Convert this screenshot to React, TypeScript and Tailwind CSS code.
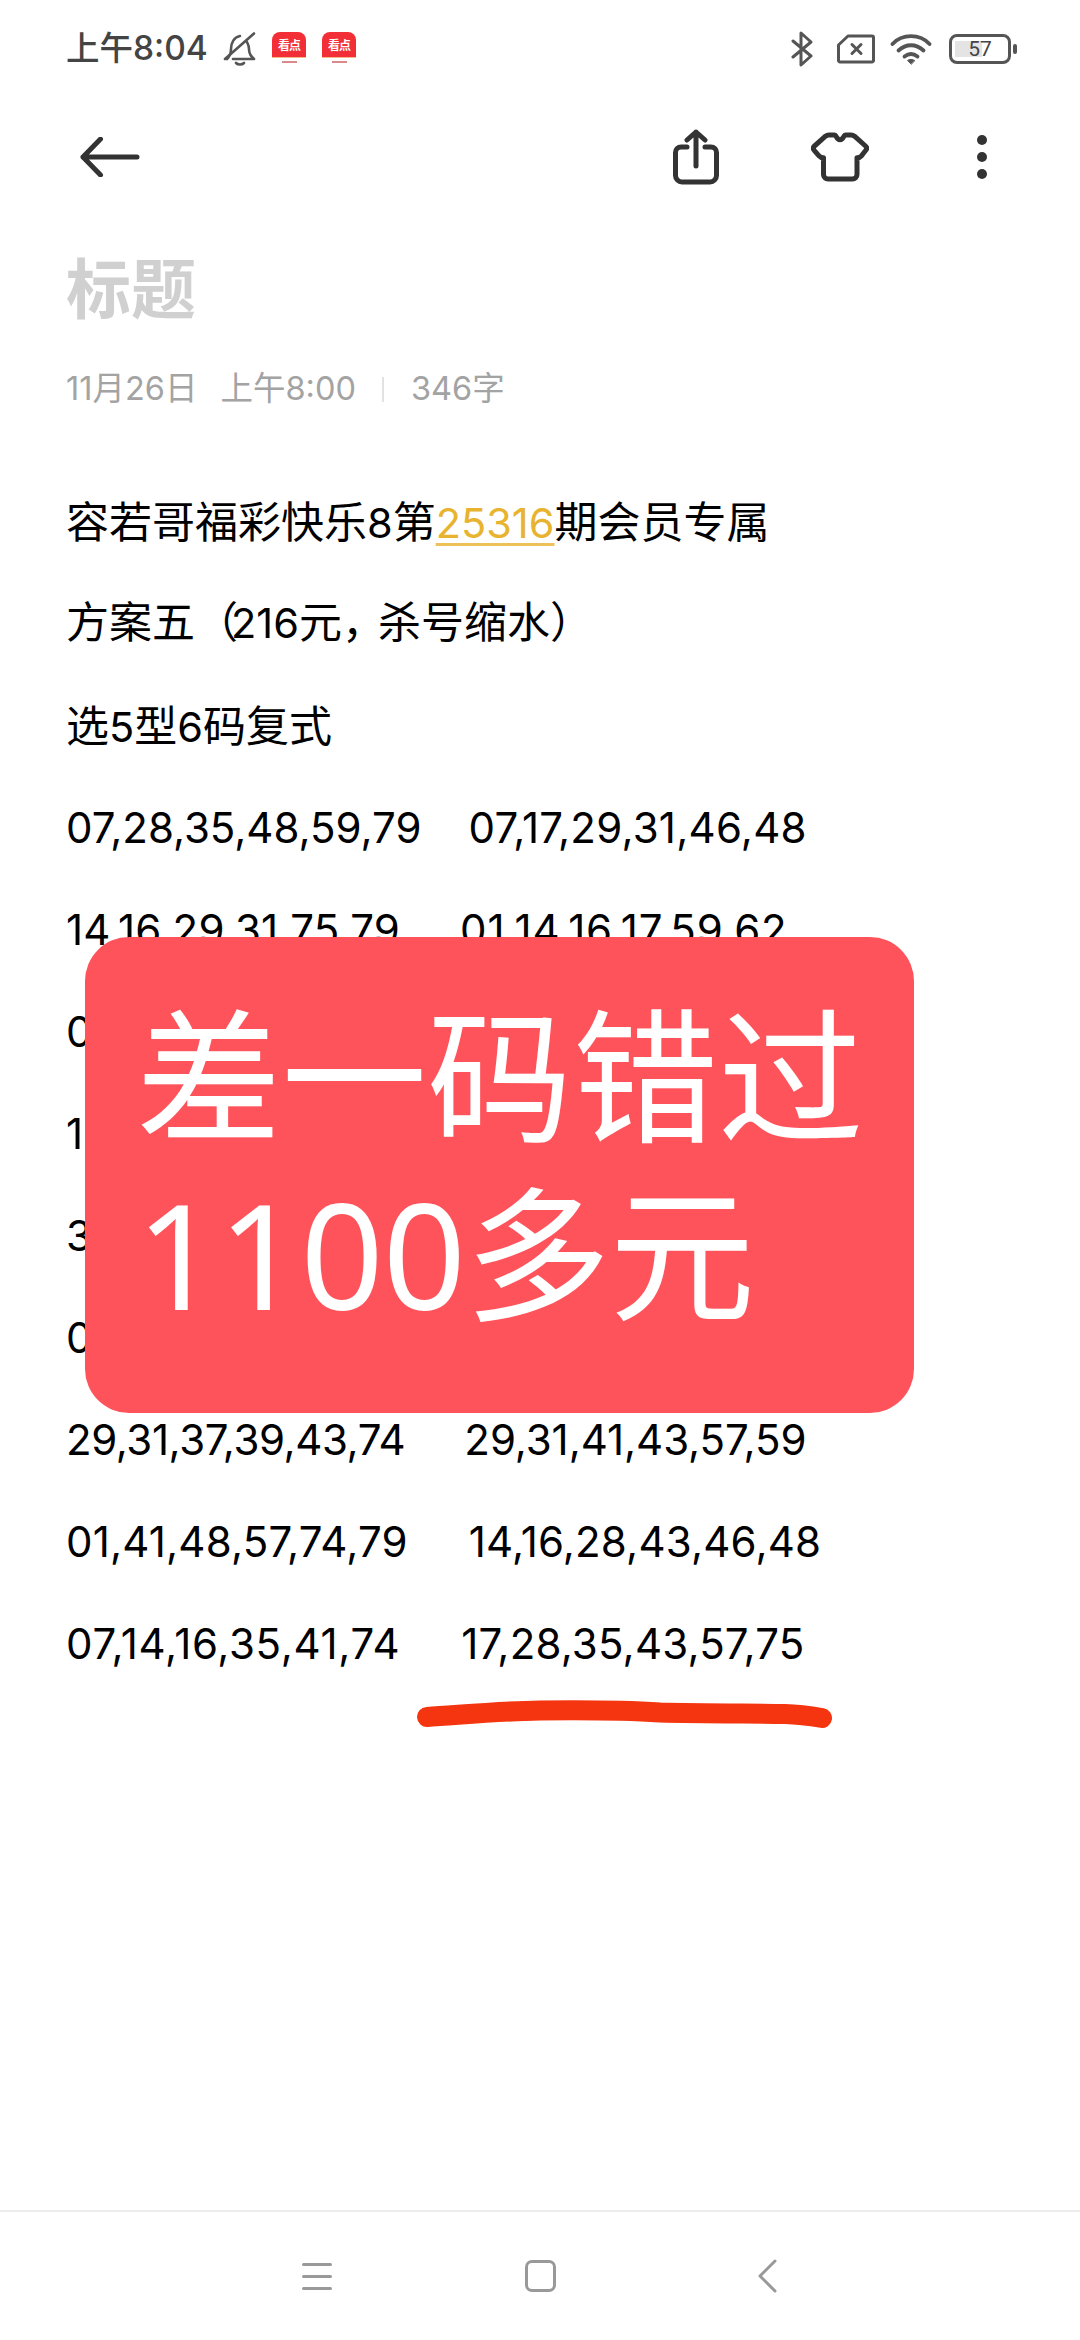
const rows: { a: string; b?: string; gap?: string; ta?: string; tb?: string }[] = [
  { a: "07,28,35,48,59,79", b: "07,17,29,31,46,48", gap: "ml-[47px]", tb: "tracking-[0.25px]" },
  { a: "14,16,29,31,75,79", b: "01,14,16,17,59,62", gap: "ml-[60px]", ta: "tracking-[0.25px]", tb: "tracking-[0.8px]" },
  { a: "0" },
  { a: "1" },
  { a: "3" },
  { a: "0" },
  { a: "29,31,37,39,43,74", b: "29,31,41,43,57,59", gap: "ml-[59px]", ta: "tracking-[-0.4px]", tb: "tracking-[-0.05px]" },
  { a: "01,41,48,57,74,79", b: "14,16,28,43,46,48", gap: "ml-[61px]", ta: "tracking-[0.2px]", tb: "tracking-[0.2px]" },
  { a: "07,14,16,35,41,74", b: "17,28,35,43,57,75", gap: "ml-[61px]", ta: "tracking-[0.7px]", tb: "tracking-[0.2px]" },
];

function D({ children }: { children: React.ReactNode }) {
  return <span className="text-[41.5px] font-['Inter',sans-serif]">{children}</span>;
}

function KanDian() {
  return (
    <div className="w-[34px] h-[34px] rounded-[8px] overflow-hidden flex flex-col bg-white">
      <div className="h-[25px] bg-[#f22f36] flex items-center justify-center text-white text-[12px] leading-none font-bold tracking-[-1px]">看点</div>
      <div className="h-[1px] bg-[#f5b98a]" />
      <div className="flex-1 flex items-center justify-center">
        <div className="w-[15px] h-[2px] bg-[#d98a8a]" />
      </div>
    </div>
  );
}

export default function App() {
  return (
    <div className="relative w-[1080px] h-[2340px] bg-white flex flex-col overflow-hidden font-['Noto_Sans_CJK_SC',sans-serif]">
      {/* status bar */}
      <div className="h-[98px] shrink-0 flex items-center pl-[66px] pr-[63px] text-[#444]">
        <span className="text-[33.5px] leading-none w-[143px] whitespace-nowrap font-medium font-['Inter','Noto_Sans_CJK_SC',sans-serif]">上午8:04</span>
        <svg className="ml-[14px]" width="34" height="34" viewBox="0 0 34 34" fill="none" stroke="#555" strokeWidth="2.6" strokeLinecap="round" strokeLinejoin="round">
          <path d="M2 27 31 1.5" />
          <path d="M4 27c3-3 4-5 4-10 0-6 3-12 9-13M24 10c1 2 2 4 2 7 0 5 2 7 5 10H10" />
          <path d="M13 31c2 2 6 2 8 0" />
        </svg>
        <div className="ml-[15px]"><KanDian /></div>
        <div className="ml-[16px]"><KanDian /></div>
        <div className="flex-1" />
        <svg width="22" height="36" viewBox="0 0 22 36" fill="none" stroke="#555" strokeWidth="3" strokeLinecap="round" strokeLinejoin="round">
          <path d="M2 10 20 25 10 34V2l10 9L2 26" />
        </svg>
        <svg className="ml-[24px]" width="38" height="30" viewBox="0 0 38 30" fill="none" stroke="#555" strokeWidth="3" strokeLinejoin="round" strokeLinecap="round">
          <path d="M11 2h24a1.500 1.500 0 0 1 1.500 1.500v23A1.500 1.500 0 0 1 35 28H3a1.500 1.500 0 0 1-1.500-1.500V11Z" />
          <path d="M15 10.500l9 9M24 10.500l-9 9" />
        </svg>
        <svg className="ml-[15px]" width="42" height="31" viewBox="0 0 42 31" fill="none" stroke="#555" strokeWidth="3.800" strokeLinecap="round">
          <path d="M2.500 10C12 -0.500 30 -0.500 39.500 10" />
          <path d="M8.500 16.500c7.500-7 17.500-7 25 0" />
          <path d="M14.500 22.500c4.500-3.500 8.500-3.500 13 0" />
          <path d="M21 30l-3.500-3.500c2-1.500 5-1.500 7 0Z" fill="#555" strokeWidth="1" strokeLinejoin="round" />
        </svg>
        <div className="ml-[17px] relative w-[62px] h-[30px] rounded-[8px] border-[3px] border-[#555] flex items-center justify-center overflow-hidden">
          <div className="absolute left-[3px] top-[4px] bottom-[4px] w-[27px] bg-[#e4e4e4]" />
          <span className="relative text-[21px] leading-none text-[#444] font-['Roboto',sans-serif]">57</span>
        </div>
        <div className="ml-[2px] w-[4px] h-[10px] rounded-[2px] bg-[#555]" />
      </div>

      {/* toolbar */}
      <div className="h-[118px] shrink-0 flex items-center pl-[80px] pr-[93px]">
        <svg width="60" height="40" viewBox="0 0 60 40" fill="none" stroke="#333" strokeWidth="5" strokeLinecap="round" strokeLinejoin="round">
          <path d="M20.500 2 3 20l17.500 18M3 20h54" />
        </svg>
        <div className="flex-1" />
        <svg width="46" height="56" viewBox="0 0 46 56" fill="none" stroke="#333" strokeWidth="5" strokeLinecap="round" strokeLinejoin="round">
          <path d="M23 37V3M14 11l9-8 9 8" />
          <path d="M14 18H8a5.500 5.500 0 0 0-5.500 5.500v23A6.500 6.500 0 0 0 9 53h28a6.500 6.500 0 0 0 6.500-6.500v-23A5.500 5.500 0 0 0 38 18h-6" />
        </svg>
        <svg className="ml-[92px]" width="58" height="50" viewBox="0 0 58 50" fill="none" stroke="#333" strokeWidth="5" strokeLinejoin="round" strokeLinecap="round">
          <path d="M18 3h5c1.500 0 2 1 2.500 2 1.500 3.500 5.500 3.500 7 0 .5-1 1-2 2.500-2h5c1.500 0 2.500.4 3.500 1.200L54.500 14c1.500 1.300 1.500 2.800.3 4.300l-4.300 5.500c-1.200 1.400-3 2-4.500 2v16.700a4.500 4.500 0 0 1-4.500 4.500H17a4.500 4.500 0 0 1-4.500-4.500V25.800c-1.500 0-3.300-.6-4.500-2l-4.800-5.500c-1.200-1.500-1.200-3 .3-4.300L14.500 4.200C15.500 3.400 16.500 3 18 3Z" />
        </svg>
        <div className="ml-[108px] w-[10px] flex flex-col gap-[7px]">
          <div className="w-[10px] h-[10px] rounded-full bg-[#333]" />
          <div className="w-[10px] h-[10px] rounded-full bg-[#333]" />
          <div className="w-[10px] h-[10px] rounded-full bg-[#333]" />
        </div>
      </div>

      {/* title and meta */}
      <div className="pl-[66px] mt-[13px] h-[112px] shrink-0 flex items-center text-[65px] font-bold leading-none text-[#d0d0d0]">标题</div>
      <div className="pl-[66px] mt-[18px] h-[60px] shrink-0 flex items-center text-[32.5px] leading-none text-[#a3a3a3] font-['Inter','Noto_Sans_CJK_SC',sans-serif]">
        <span>11月26日</span>
        <span className="ml-[23px]">上午8:00</span>
        <span className="ml-[26px] w-[2px] h-[25px] bg-[#e2e2e2]" />
        <span className="ml-[27px]">346字</span>
      </div>

      {/* body */}
      <div className="mt-[49px] pl-[66px] text-[43px] leading-[102px] text-black whitespace-pre">
        <p className="h-[102px]">容若哥福彩快乐<D>8</D>第<span className="text-[#e8b32e] underline decoration-[3px] underline-offset-[5px] decoration-[#ecc15a]"><D>25316</D></span>期会员专属</p>
        <p className="h-[102px] mt-[-2px] mb-[2px]">方案五<span className="tracking-[-7px]">（</span><D>216</D>元<span className="tracking-[-7px]">，</span>杀号缩水）</p>
        <p className="h-[102px]">选<D>5</D>型<D>6</D>码复式</p>
        {rows.map((r, i) => (
          <p key={i} className="flex h-[102px] pt-[3px] text-[42px] font-['Inter',sans-serif]">
            <span className={r.ta}>{r.a}</span>
            {r.b && <span className={`${r.gap} ${r.tb ?? ""}`}>{r.b}</span>}
          </p>
        ))}
      </div>

      {/* red note lying over the list */}
      <div className="absolute left-[85px] top-[937px] w-[829px] h-[476px] rounded-[44px] bg-[#ff535b] text-white pl-[51px] pt-[50px] text-[145.5px] leading-[178px] whitespace-nowrap font-['Noto_Sans','Noto_Sans_CJK_SC',sans-serif]">
        <div>差一码错过</div>
        <div className="tracking-[-1px]">1100多元</div>
      </div>

      {/* hand-drawn underline */}
      <svg className="absolute left-[410px] top-[1695px]" width="430" height="40" viewBox="0 0 430 40" fill="none">
        <path d="M17 22C50 20 90 16 130 15.500 170 15 210 15 250 17.500 290 18.500 340 18.500 375 19 390 19.500 400 21 412 23" stroke="#f4350f" strokeWidth="20" strokeLinecap="round" strokeLinejoin="round" />
      </svg>

      {/* navigation bar */}
      <div className="mt-auto h-[130px] shrink-0 border-t-2 border-[#ececec] flex items-center">
        <div className="ml-[302px] w-[30px] flex flex-col gap-[9px]">
          <div className="h-[3px] rounded-full bg-[#999]" />
          <div className="h-[3px] rounded-full bg-[#999]" />
          <div className="h-[3px] rounded-full bg-[#999]" />
        </div>
        <div className="ml-[193px] w-[31px] h-[32px] rounded-[7px] border-[3px] border-[#999]" />
        <svg className="ml-[202px]" width="20" height="34" viewBox="0 0 20 34" fill="none" stroke="#999" strokeWidth="3" strokeLinecap="round" strokeLinejoin="round">
          <path d="M17 2 2 17l15 15" />
        </svg>
      </div>
    </div>
  );
}
